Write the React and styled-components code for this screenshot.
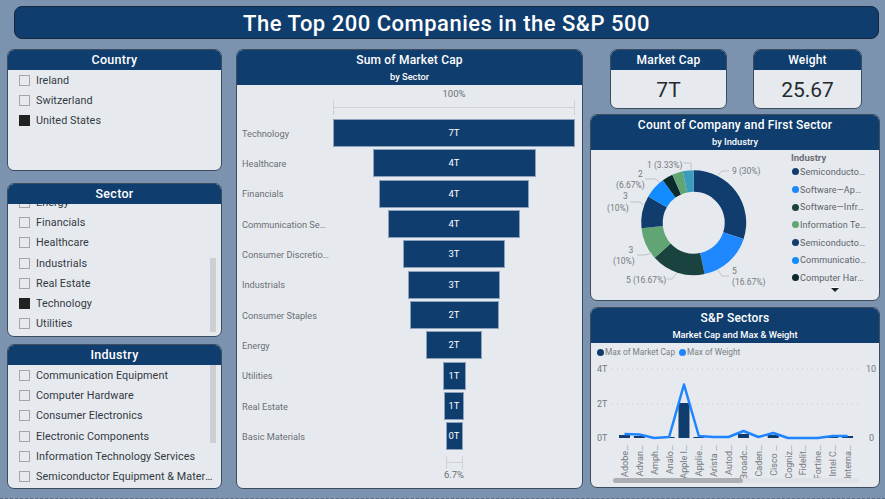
import React from "react";
import styled, { createGlobalStyle } from "styled-components";

const navy = "#0f3d6e";
const paper = "#e6eaef";
const font = `"Roboto", "Liberation Sans", sans-serif`;

const Global = createGlobalStyle`
  html, body { margin: 0; padding: 0; background: #7b93ae; }
  * { box-sizing: border-box; }
`;

const Page = styled.div`
  width: 885px;
  height: 499px;
  overflow: hidden;
  background: #7b93ae;
  font-family: ${font};
  padding: 6px 5px 0 7px;
  border-bottom: 1px dashed #5c6f86;
`;
const TitleBar = styled.h1`
  margin: 0 1px 10px 7px;
  height: 33px;
  background: ${navy};
  border: 1px solid #16263c;
  border-radius: 8px;
  color: #fff;
  font-size: 22px;
  font-weight: 500;
  letter-spacing: 0.5px;
  line-height: 33px;
  text-align: center;
`;
const Columns = styled.div`
  display: grid;
  grid-template-columns: 229px 354px 290px;
  align-items: start;
`;
const Stack = styled.div`
  display: flex;
  flex-direction: column;
`;
const LeftCol = styled(Stack)`
  padding-right: 14px;
`;
const MidCol = styled.div`
  padding-right: 7px;
`;
const Panel = styled.section`
  position: relative;
  height: ${(p) => p.$h}px;
  margin-top: ${(p) => p.$mt || 0}px;
  background: ${paper};
  border: 1px solid #3d4c5f;
  border-bottom-width: 1.5px;
  border-radius: 7px;
  overflow: hidden;
  display: flex;
  flex-direction: column;
`;
const Head = styled.header`
  flex: none;
  height: ${(p) => (p.$tall ? 35 : 20)}px;
  background: ${navy};
  color: #fff;
  text-align: center;
`;
const HeadTitle = styled.div`
  font-size: ${(p) => (p.$small ? 12 : 12.5)}px;
  font-weight: 500;
  letter-spacing: ${(p) => (p.$small ? 0.2 : 0.3)}px;
  line-height: ${(p) => (p.$tall ? 21 : 20)}px;
`;
const HeadSub = styled.div`
  font-size: 9.3px;
  font-weight: 500;
  line-height: 12px;
`;

/* slicers */
const List = styled.ul`
  list-style: none;
  margin: ${(p) => p.$offset}px 0 0;
  padding: 0 0 0 11px;
`;
const ClipBody = styled.div`
  flex: 1;
  overflow: hidden;
`;
const Item = styled.li`
  height: 20.3px;
  display: flex;
  align-items: center;
  gap: 6px;
  font-size: 10.8px;
  letter-spacing: 0.06px;
  color: #34393f;
  white-space: nowrap;
`;
const Check = styled.span`
  flex: none;
  width: 11px;
  height: 11px;
  border: 1px solid ${(p) => (p.$on ? "#222" : "#a5a5a5")};
  background: ${(p) => (p.$on ? "#222" : "transparent")};
`;
const ItemText = styled.span`
  width: 177px;
  overflow: hidden;
  text-overflow: ellipsis;
`;
const ScrollThumb = styled.div`
  position: absolute;
  right: 5px;
  top: ${(p) => p.$top}px;
  width: 6px;
  height: ${(p) => p.$h}px;
  background: #cdcfd2;
`;

/* funnel */
const AxisBlock = styled.div`
  margin-left: 96px;
  width: 242px;
  height: ${(p) => p.$h}px;
  padding-top: ${(p) => p.$pt || 0}px;
  display: flex;
  flex-direction: column;
  align-items: center;
`;
const AxisLabel = styled.div`
  font-size: 9.5px;
  color: #6b6f74;
  line-height: 12px;
`;
const AxisRule = styled.div`
  width: ${(p) => p.$w}px;
  height: ${(p) => p.$h}px;
  border-left: 1px solid #cfd2d5;
  border-right: 1px solid #cfd2d5;
  background: linear-gradient(#cfd2d5, #cfd2d5) center / 100% 1px no-repeat;
`;
const FunnelRow = styled.div`
  display: grid;
  grid-template-columns: 86px 242px;
  column-gap: 5px;
  padding-left: 5px;
  height: 30.33px;
  align-items: center;
`;
const FunnelLabel = styled.div`
  font-size: 9.2px;
  color: #6b6f74;
  white-space: nowrap;
  overflow: hidden;
  text-overflow: ellipsis;
  width: 87px;
`;
const FunnelTrack = styled.div`
  display: flex;
  justify-content: center;
`;
const Bar = styled.div`
  height: 28px;
  background: ${navy};
  border: 1px solid #8ba1bc;
  color: #fff;
  font-size: 9.5px;
  line-height: 26px;
  text-align: center;
`;

/* KPI */
const KpiRow = styled.div`
  display: flex;
  gap: 26px;
  padding-left: 20px;
  margin-bottom: 5px;
`;
const Kpi = styled(Panel)`
  width: ${(p) => p.$w}px;
`;
const KpiValue = styled.div`
  flex: 1;
  display: flex;
  align-items: center;
  justify-content: center;
  padding-top: 1px;
  font-size: 21px;
  color: #252a30;
`;

/* donut */
const DonutBody = styled.div`
  flex: 1;
  display: grid;
  grid-template-columns: 200px 1fr;
`;
const Legend = styled.div`
  position: relative;
  padding-top: 1px;
`;
const LegendTitle = styled.div`
  font-size: 9.5px;
  font-weight: 700;
  color: #6b6f74;
  line-height: 13px;
  margin-bottom: -1px;
`;
const LegendRow = styled.div`
  height: 17.7px;
  display: flex;
  align-items: center;
  gap: 1px;
  padding-left: 1px;
  font-size: 9px;
  letter-spacing: 0.1px;
  color: #5d6268;
  white-space: nowrap;
`;
const Dot = styled.span`
  flex: none;
  width: 7px;
  height: 7px;
  border-radius: 50%;
  background: ${(p) => p.$c};
`;
const LegendText = styled.span`
  width: 66px;
  overflow: hidden;
  text-overflow: ellipsis;
`;
const MoreArrow = styled.div`
  position: absolute;
  left: 40px;
  top: 138px;
  width: 0;
  height: 0;
  border-left: 4px solid transparent;
  border-right: 4px solid transparent;
  border-top: 4px solid #1d2228;
  filter: drop-shadow(0 -1px 0 #fff);
`;

/* combo */
const ComboLegend = styled.div`
  display: flex;
  align-items: center;
  gap: 1px;
  height: 18px;
  padding-left: 6px;
  font-size: 8.3px;
  color: #7a7e83;
`;
const SmallDot = styled.span`
  width: 7px;
  height: 7px;
  border-radius: 50%;
  background: ${(p) => p.$c};
`;
const Spacer = styled.span`
  width: 2px;
`;
const ScrollTrack = styled.div`
  margin: 0 20px 0 22px;
  height: 5px;
  border-radius: 3px;
  background: #dfe2e6;
`;
const ScrollBar = styled.div`
  width: 130px;
  height: 5px;
  border-radius: 3px;
  background: #acafb3;
`;

const ChartText = styled.text`
  font-family: ${font};
  font-size: ${(p) => p.$s || 8.5}px;
  fill: #74787d;
`;

const Slicer = ({ title, h, mt, items, offset = 0, thumb }) => (
  <Panel $h={h} $mt={mt}>
    <Head><HeadTitle>{title}</HeadTitle></Head>
    <ClipBody>
      <List $offset={offset}>
        {items.map((t) => (
          <Item key={t.n}>
            <Check $on={t.on} />
            <ItemText>{t.n}</ItemText>
          </Item>
        ))}
      </List>
    </ClipBody>
    {thumb && <ScrollThumb $top={thumb[0]} $h={thumb[1]} />}
  </Panel>
);

const funnel = [
  ["Technology", 242, "7T"],
  ["Healthcare", 163, "4T"],
  ["Financials", 150, "4T"],
  ["Communication Services", 132, "4T"],
  ["Consumer Discretionary", 102, "3T"],
  ["Industrials", 92, "3T"],
  ["Consumer Staples", 89, "2T"],
  ["Energy", 56, "2T"],
  ["Utilities", 23, "1T"],
  ["Real Estate", 20, "1T"],
  ["Basic Materials", 17, "0T"],
];

const slices = [
  [9, "#113d6e"],
  [5, "#1f88ff"],
  [5, "#1a423e"],
  [3, "#62a574"],
  [3, "#113d6e"],
  [2, "#118dff"],
  [1, "#0b2a2c"],
  [1, "#62a574"],
  [1, "#3b9dbd"],
];

const Donut = () => {
  const cx = 102.7, cy = 72.7, R = 52.5, r = 31;
  let a = 0;
  const pt = (rad, ang) => [cx + rad * Math.sin(ang), cy - rad * Math.cos(ang)];
  const arcs = slices.map(([v, c]) => {
    const a0 = a;
    const a1 = a + (v / 30) * Math.PI * 2;
    a = a1;
    const [x0, y0] = pt(R, a0), [x1, y1] = pt(R, a1), [x2, y2] = pt(r, a1), [x3, y3] = pt(r, a0);
    const large = a1 - a0 > Math.PI ? 1 : 0;
    return <path key={a0} fill={c} d={`M${x0} ${y0}A${R} ${R} 0 ${large} 1 ${x1} ${y1}L${x2} ${y2}A${r} ${r} 0 ${large} 0 ${x3} ${y3}Z`} />;
  });
  const lines = [
    "M127 25L131 21H138",
    "M127 120L131 126H138",
    "M86 123L81 129H76",
    "M61 103L54 105H46",
    "M52 55L49 52H39",
    "M69 33L65 29H54",
    "M100 21V13H92",
  ];
  return (
    <svg width="200" height="150" viewBox="0 0 200 150">
      {arcs}
      {lines.map((d) => <path key={d} d={d} fill="none" stroke="#bfc2c6" strokeWidth="1" />)}
      <ChartText x="141" y="24">9 (30%)</ChartText>
      <ChartText x="141" y="124">5</ChartText>
      <ChartText x="141" y="135">(16.67%)</ChartText>
      <ChartText x="35" y="133">5 (16.67%)</ChartText>
      <ChartText x="37.5" y="103">3</ChartText>
      <ChartText x="22" y="114">(10%)</ChartText>
      <ChartText x="32" y="49">3</ChartText>
      <ChartText x="16" y="61">(10%)</ChartText>
      <ChartText x="47" y="27">2</ChartText>
      <ChartText x="25" y="38">(6.67%)</ChartText>
      <ChartText x="56" y="18">1 (3.33%)</ChartText>
    </svg>
  );
};

const combo = [
  ["Adobe…", 3, 4], ["Advan…", 2, 3.5], ["Amph…", 0, 0], ["Analo…", 1, 1],
  ["Apple I…", 35, 53.5], ["Applie…", 1, 2], ["Arista …", 0, 1], ["Autod…", 0, 1],
  ["Broadc…", 4, 7], ["Caden…", 0, 1], ["Cisco …", 3, 5], ["Cogniz…", 0, 0],
  ["Fidelit…", 0, 0], ["Fortine…", 0, 0], ["Intel C…", 1, 2], ["Interna…", 2, 2],
];

const Combo = () => {
  const base = 77;
  const xOf = (i) => 33.5 + i * 14.87;
  return (
    <svg width="288" height="117" viewBox="0 0 288 117">
      {[8, 43].map((y) => (
        <line key={y} x1="21" x2="269" y1={y} y2={y} stroke="#c4c7cb" strokeDasharray="1 4" />
      ))}
      <ChartText x="6" y="11" $s={9}>4T</ChartText>
      <ChartText x="6" y="46" $s={9}>2T</ChartText>
      <ChartText x="6" y="80" $s={9}>0T</ChartText>
      <ChartText x="275" y="11" $s={9}>10</ChartText>
      <ChartText x="278" y="80" $s={9}>0</ChartText>
      {combo.map(([n, b], i) => (
        <rect key={n} x={xOf(i) - 5.5} y={base - b} width="11" height={b} fill="#113d6e" />
      ))}
      <polyline
        fill="none"
        stroke="#1f84ff"
        strokeWidth="2.5"
        strokeLinejoin="round"
        points={combo.map(([, , w], i) => `${xOf(i)},${base - w}`).join(" ")}
      />
      {combo.map(([n], i) => (
        <ChartText key={n} textAnchor="end" transform={`translate(${xOf(i) + 3.5} 84) rotate(-90)`} $s={9}>
          {n}
        </ChartText>
      ))}
    </svg>
  );
};

const legend = [
  ["Semiconductors", "#113d6e"],
  ["Software—Application", "#1f88ff"],
  ["Software—Infrastructure", "#1a423e"],
  ["Information Technology", "#62a574"],
  ["Semiconductor Equipment", "#113d6e"],
  ["Communication Equipment", "#118dff"],
  ["Computer Hardware", "#0b2a2c"],
];

export default function App() {
  return (
    <Page>
      <Global />
      <TitleBar>The Top 200 Companies in the S&amp;P 500</TitleBar>
      <Columns>
        <LeftCol>
          <Slicer
            title="Country"
            h={122}
            items={[{ n: "Ireland" }, { n: "Switzerland" }, { n: "United States", on: true }]}
          />
          <Slicer
            title="Sector"
            h={154}
            mt={12}
            offset={-12}
            thumb={[74, 74]}
            items={[
              { n: "Energy" }, { n: "Financials" }, { n: "Healthcare" }, { n: "Industrials" },
              { n: "Real Estate" }, { n: "Technology", on: true }, { n: "Utilities" },
            ]}
          />
          <Slicer
            title="Industry"
            h={145}
            mt={7}
            thumb={[20, 78]}
            items={[
              { n: "Communication Equipment" }, { n: "Computer Hardware" }, { n: "Consumer Electronics" },
              { n: "Electronic Components" }, { n: "Information Technology Services" },
              { n: "Semiconductor Equipment & Materials" },
            ]}
          />
        </LeftCol>

        <MidCol>
          <Panel $h={440}>
            <Head $tall>
              <HeadTitle $tall $small>Sum of Market Cap</HeadTitle>
              <HeadSub>by Sector</HeadSub>
            </Head>
            <AxisBlock $h={33} $pt={3}>
              <AxisLabel>100%</AxisLabel>
              <AxisRule $w={242} $h={15} />
            </AxisBlock>
            {funnel.map(([n, w, v]) => (
              <FunnelRow key={n}>
                <FunnelLabel>{n}</FunnelLabel>
                <FunnelTrack>
                  <Bar style={{ width: w }}>{v}</Bar>
                </FunnelTrack>
              </FunnelRow>
            ))}
            <AxisBlock $h={30} $pt={4}>
              <AxisRule $w={17} $h={13} />
              <AxisLabel>6.7%</AxisLabel>
            </AxisBlock>
          </Panel>
        </MidCol>

        <Stack>
          <KpiRow>
            <Kpi $h={60} $w={117}>
              <Head><HeadTitle $small>Market Cap</HeadTitle></Head>
              <KpiValue>7T</KpiValue>
            </Kpi>
            <Kpi $h={60} $w={109}>
              <Head><HeadTitle $small>Weight</HeadTitle></Head>
              <KpiValue>25.67</KpiValue>
            </Kpi>
          </KpiRow>
          <Panel $h={187}>
            <Head $tall>
              <HeadTitle $tall $small>Count of Company and First Sector</HeadTitle>
              <HeadSub>by Industry</HeadSub>
            </Head>
            <DonutBody>
              <Donut />
              <Legend>
                <LegendTitle>Industry</LegendTitle>
                {legend.map(([n, c]) => (
                  <LegendRow key={n}>
                    <Dot $c={c} />
                    <LegendText>{n}</LegendText>
                  </LegendRow>
                ))}
                <MoreArrow />
              </Legend>
            </DonutBody>
          </Panel>
          <Panel $h={181} $mt={6}>
            <Head $tall>
              <HeadTitle $tall $small>S&amp;P Sectors</HeadTitle>
              <HeadSub>Market Cap and Max &amp; Weight</HeadSub>
            </Head>
            <ComboLegend>
              <SmallDot $c="#113d6e" />Max of Market Cap
              <Spacer />
              <SmallDot $c="#1f84ff" />Max of Weight
            </ComboLegend>
            <Combo />
            <ScrollTrack><ScrollBar /></ScrollTrack>
          </Panel>
        </Stack>
      </Columns>
    </Page>
  );
}
